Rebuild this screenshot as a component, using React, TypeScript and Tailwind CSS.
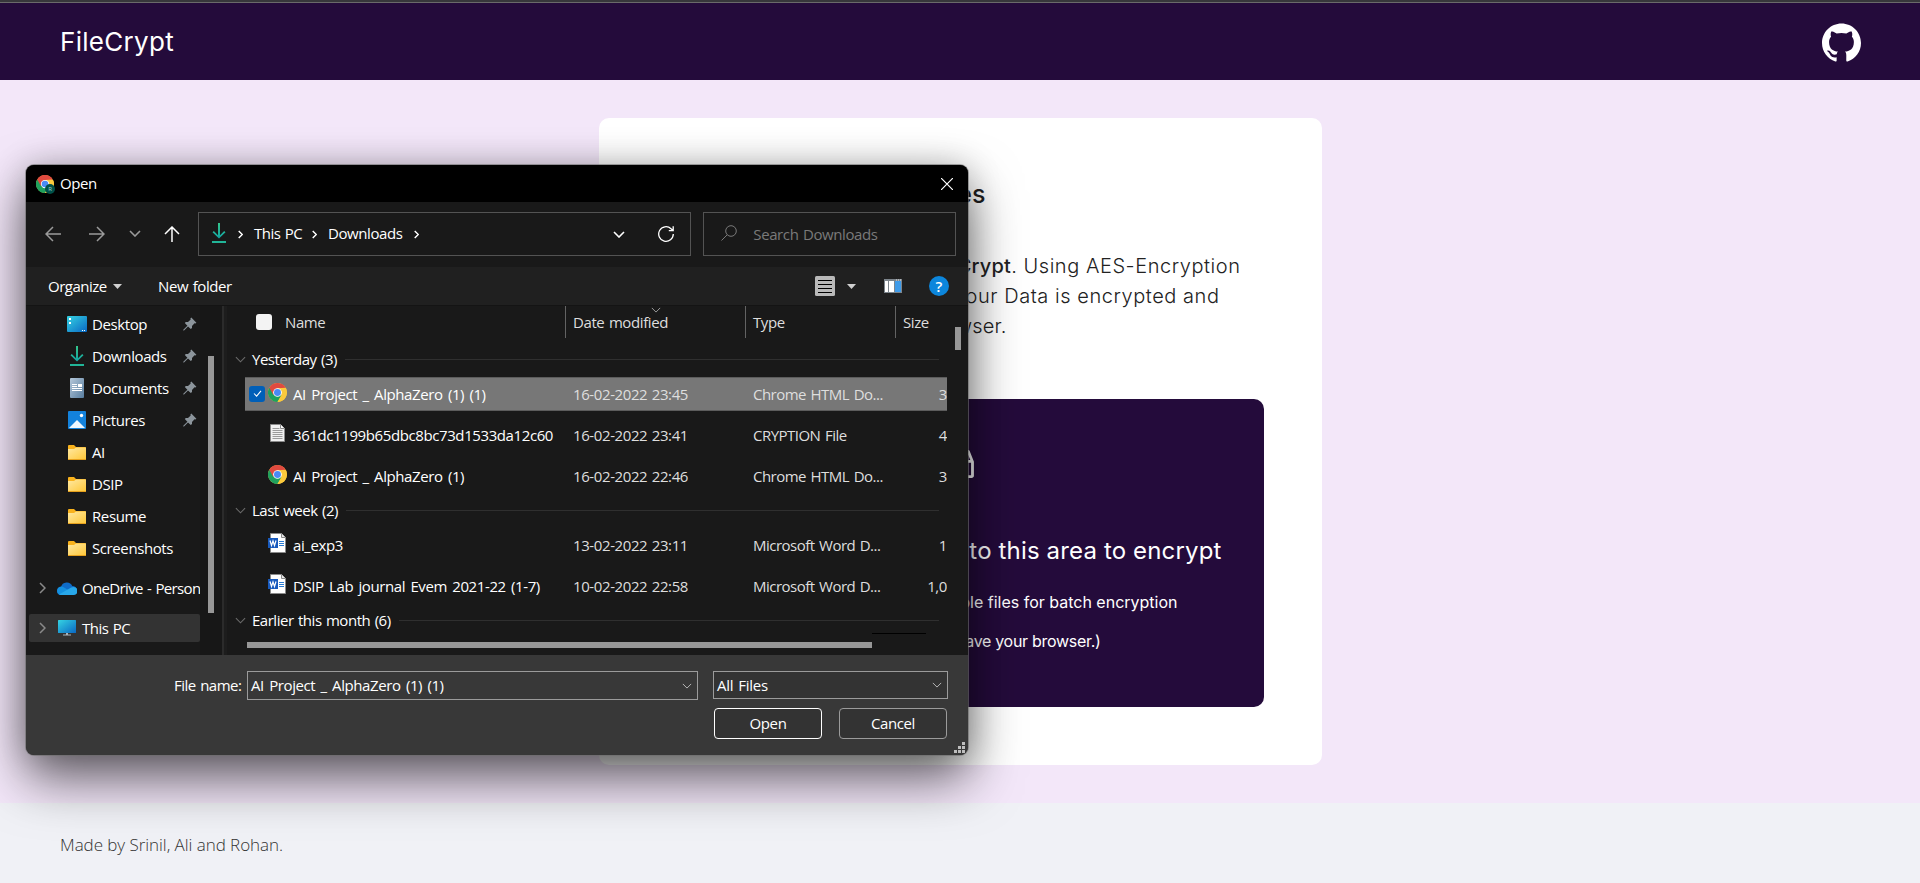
import React from "react";
import { AiOutlineInbox } from "react-icons/ai";
import { SiGithub } from "react-icons/si";

type Box = { className?: string };

function Chrome({ className = "" }: Box) {
  return (
    <svg viewBox="0 0 48 48" className={className}>
      <circle cx="24" cy="24" r="24" fill="#fbc93c" />
      <path d="M24 24 L3.2 12 A24 24 0 0 0 24 48 L34.4 30 Z" fill="#1fa15d" />
      <path d="M3.2 12 A24 24 0 0 1 44.8 12 L24 13 L13.6 30 Z" fill="#e04a3f" />
      <path d="M24 48 L34.4 30 L24 13 H45.3 A24 24 0 0 1 24 48Z" fill="#fbc93c" />
      <circle cx="24" cy="24" r="11" fill="#fff" />
      <circle cx="24" cy="24" r="8.8" fill="#4a8af4" />
    </svg>
  );
}

function Chevron({ d, className = "", w = 1.2 }: Box & { d: "down" | "right"; w?: number }) {
  return d === "down" ? (
    <svg viewBox="0 0 12 7" fill="none" stroke="currentColor" strokeWidth={w} className={className}>
      <path d="M1 1l5 5 5-5" />
    </svg>
  ) : (
    <svg viewBox="0 0 7 12" fill="none" stroke="currentColor" strokeWidth={w} className={className}>
      <path d="M1 1l5 5-5 5" />
    </svg>
  );
}

function DownloadIcon({ className = "" }: Box) {
  return (
    <svg viewBox="0 0 14 20" fill="none" className={className}>
      <defs>
        <linearGradient id="dl" x1="0" y1="0" x2="0" y2="1">
          <stop offset="0" stopColor="#35c68b" />
          <stop offset="1" stopColor="#10a3a3" />
        </linearGradient>
      </defs>
      <path d="M6 0h2v12.2l4.2-4.2 1.3 1.3L7 15.5.5 9.300l1.300-1.300L6 12.200z" fill="url(#dl)" />
      <path d="M0 18h14v2H0z" fill="#21b598" />
    </svg>
  );
}

function Folder() {
  return (
    <svg viewBox="0 0 18 15" className="h-[15px] w-[18px]">
      <defs>
        <linearGradient id="fold" x1="0" y1="0" x2="1" y2="1">
          <stop offset="0" stopColor="#ffe9a2" />
          <stop offset="1" stopColor="#ffc83a" />
        </linearGradient>
      </defs>
      <path d="M0 1q0-1 1-1h5l2 2h9q1 0 1 1v10H0z" fill="#f9b21c" />
      <path d="M0 4h6l2-1.500h10V14H0z" fill="url(#fold)" />
      <path d="M0 14h18v1H0z" fill="#e6a01c" />
    </svg>
  );
}

function DesktopIcon() {
  return (
    <svg viewBox="0 0 20 16" className="h-[16px] w-[20px]">
      <defs>
        <linearGradient id="desk" x1="0" y1="0" x2="1" y2="1">
          <stop offset="0" stopColor="#35d3e2" />
          <stop offset="1" stopColor="#0a68c4" />
        </linearGradient>
      </defs>
      <rect width="20" height="16" rx="1" fill="url(#desk)" />
      <path d="M2 2h2v2H2zM2 6h2v2H2zM15 14h1v1h-1zM17 14h1v1h-1z" fill="#fff" />
    </svg>
  );
}

function DocumentsIcon() {
  return (
    <svg viewBox="0 0 14 20" className="h-[20px] w-[14px]">
      <defs>
        <linearGradient id="doc" x1="0" y1="0" x2="1" y2="1">
          <stop offset="0" stopColor="#b5c8da" />
          <stop offset="1" stopColor="#577d9f" />
        </linearGradient>
      </defs>
      <rect width="14" height="20" rx="1" fill="url(#doc)" />
      <path d="M2 6h5v1H2zM2 8h5v1H2zM8 6h4v3H8zM2 10h10v1H2zM2 12h10v1H2z" fill="#fff" />
    </svg>
  );
}

function PicturesIcon() {
  return (
    <svg viewBox="0 0 18 18" className="h-[18px] w-[18px]">
      <rect width="18" height="18" rx="1" fill="#1382dc" />
      <path d="M1 17l8-8 8 8z" fill="#eef7ff" />
      <circle cx="13.500" cy="4.500" r="1.700" fill="#fff" />
    </svg>
  );
}

function OneDriveIcon() {
  return (
    <svg viewBox="0 0 20 13" className="h-[13px] w-[20px]">
      <path d="M4 5A6 6 0 0 1 15.300 4 4.600 4.600 0 0 1 16.500 13H4A4 4 0 0 1 4 5z" fill="#0f6cc8" />
      <path d="M0.200 8A4.200 4.200 0 0 1 7 5.400L13 9 6 13H4A4.200 4.200 0 0 1 .200 8z" fill="#1490df" />
      <path d="M2 12.500L12 6.700Q14 5 16.500 5A4 4 0 0 1 16.500 13H4z" fill="#28a8ea" />
    </svg>
  );
}

function MonitorIcon() {
  return (
    <svg viewBox="0 0 18 16" className="h-[16px] w-[18px]">
      <defs>
        <linearGradient id="mon" x1="0" y1="0" x2="1" y2="1">
          <stop offset="0" stopColor="#35d3e2" />
          <stop offset="1" stopColor="#0a68c4" />
        </linearGradient>
      </defs>
      <rect width="18" height="13" rx=".5" fill="url(#mon)" />
      <path d="M8 13h2v1.500h3v1H5v-1h3z" fill="#a9b4bd" />
    </svg>
  );
}

function Pin() {
  return (
    <svg viewBox="0 0 14 14" className="h-[14px] w-[14px]">
      <path d="M8.300 0.600L13.400 5.700 12.400 6.500 11.500 6.300 9 9 9 11 7.800 12 5 9.400 1 13.500.300 13.500.300 12.800 4.400 8.800 1.800 6 2.800 5 5 5 7.700 2.500 7.400 1.500z" fill="#8c959c" />
    </svg>
  );
}

function TextFile() {
  return (
    <svg viewBox="0 0 15 18" className="h-[18px] w-[15px]">
      <path d="M.5.500h10l4 4v13H.5z" fill="#f0f0f0" stroke="#8a8a8a" />
      <path d="M10.500.500v4h4" fill="#fff" stroke="#8a8a8a" />
      <path d="M2.500 4.500h7M2.500 6.500h10M2.500 8.500h10M2.500 10.500h10M2.500 12.500h10M2.500 14.500h10" stroke="#9a9a9a" />
    </svg>
  );
}

function WordFile() {
  return (
    <svg viewBox="0 0 18 20" className="h-[20px] w-[18px]">
      <path d="M2.500.500h11l4 4v15h-15z" fill="#fff" stroke="#8a8a8a" />
      <path d="M13.500.500v4h4" fill="#e8e8e8" stroke="#8a8a8a" />
      <path d="M11 8.500h5M11 10.500h5M11 12.500h5" stroke="#2b7cd3" />
      <rect y="5" width="10" height="10" fill="#185abd" />
      <path d="M2 7.500l1.500 5L5 8l1.500 4.500 1.500-5" fill="none" stroke="#fff" strokeWidth="1.200" />
    </svg>
  );
}

const places: { name: string; icon: React.ReactNode; pinned?: boolean }[] = [
  { name: "Desktop", icon: <DesktopIcon />, pinned: true },
  { name: "Downloads", icon: <DownloadIcon className="h-[20px] w-[14px]" />, pinned: true },
  { name: "Documents", icon: <DocumentsIcon />, pinned: true },
  { name: "Pictures", icon: <PicturesIcon />, pinned: true },
  { name: "AI", icon: <Folder /> },
  { name: "DSIP", icon: <Folder /> },
  { name: "Resume", icon: <Folder /> },
  { name: "Screenshots", icon: <Folder /> },
];

function Group({ label, className = "" }: { label: string } & Box) {
  return (
    <div className={`flex items-center pl-2 ${className}`}>
      <Chevron d="down" className="mr-[6px] h-[7px] w-[11px] text-[#6b6b6b]" />
      <span className="mr-2 tracking-[-0.48px]">{label}</span>
      <span className="mr-[9px] h-px flex-1 bg-[#2f2f2f]" />
    </div>
  );
}

type Row = { icon: React.ReactNode; name: string; date: string; type: string; size: string; selected?: boolean };

function FileRow({ icon, name, date, type, size, selected }: Row) {
  return (
    <div className="flex h-[41px] items-center pl-[18px]">
      <div className={`flex h-[34px] w-[702px] items-center overflow-hidden whitespace-nowrap ${selected ? "border-y border-[#5c5c5c] bg-[#777777]" : ""}`}>
        <div className="flex w-[22px] shrink-0 pl-[4px]">
          {selected && (
            <span className="flex h-4 w-4 items-center justify-center rounded-[3px] bg-[#005fb8]">
              <svg viewBox="0 0 10 8" className="h-[7px] w-[9px]" fill="none" stroke="#fff" strokeWidth="1.200">
                <path d="M1 4l3 3 5-6" />
              </svg>
            </span>
          )}
        </div>
        <div className="mr-[6px] flex w-5 shrink-0 justify-center pb-[3px]">{icon}</div>
        <span className="w-[280px] shrink-0 tracking-[-0.4px] [word-spacing:1.8px]">{name}</span>
        <span className="w-[180px] shrink-0 tracking-[-0.4px] [word-spacing:1px] text-[#dedede]">{date}</span>
        <span className="w-[142px] shrink-0 tracking-[-0.52px] [word-spacing:1.2px] text-[#dedede]">{type}</span>
        <span className="flex-1 text-right text-[#dedede]">{size}</span>
      </div>
    </div>
  );
}

function Dialog() {
  return (
    <div className="absolute left-[26px] top-[165px] flex h-[590px] w-[942px] flex-col overflow-hidden rounded-[8px] bg-[#191919] font-['Open_Sans','Noto_Sans',sans-serif] text-[15px] leading-5 tracking-[-0.4px] text-white [word-spacing:1px]">
      <div className="flex h-[37px] shrink-0 items-center bg-black pl-[10px] pr-[15px]">
        <span className="relative mr-[6px] h-[18px] w-[18px]">
          <Chrome className="h-[18px] w-[18px]" />
          <span className="absolute -bottom-px -right-px flex h-[10px] w-[10px] items-center justify-center rounded-full bg-[#005048] text-[6px] leading-none text-[#9fd0c8]">R</span>
        </span>
        <span className="flex-1 pb-[2px]">Open</span>
        <svg viewBox="0 0 12 12" className="h-3 w-3" stroke="#fff" strokeWidth="1.200">
          <path d="M0 0l12 12M12 0L0 12" />
        </svg>
      </div>

      <div className="flex h-[65px] shrink-0 items-center pb-[1px] pl-[19px] pr-3">
        <svg viewBox="0 0 16 16" fill="none" stroke="#9a9a9a" strokeWidth="1.500" className="mr-7 h-4 w-4">
          <path d="M16 8H1M8 1L1 8l7 7" />
        </svg>
        <svg viewBox="0 0 16 16" fill="none" stroke="#9a9a9a" strokeWidth="1.500" className="mr-[24px] h-4 w-4">
          <path d="M0 8h15M8 1l7 7-7 7" />
        </svg>
        <Chevron d="down" w={1.6} className="mb-[2px] mr-[23px] h-[7px] w-3 text-[#9a9a9a]" />
        <svg viewBox="0 0 16 16" fill="none" stroke="#fff" strokeWidth="1.500" className="mr-[18px] h-4 w-4">
          <path d="M8 16V1M1 8l7-7 7 7" />
        </svg>
        <div className="mr-3 flex h-11 w-[494px] items-center border border-[#535353] pl-[13px] pr-4">
          <DownloadIcon className="mb-[2px] mr-3 h-5 w-[14px]" />
          <Chevron d="right" w={2} className="mr-[11px] h-[9px] w-[5px]" />
          <span className="w-[58px] pb-[2px] tracking-[-0.5px]">This PC</span>
          <Chevron d="right" w={2} className="mr-[11px] h-[9px] w-[5px]" />
          <span className="w-[86px] pb-[2px]">Downloads</span>
          <Chevron d="right" w={2} className="h-[9px] w-[5px]" />
          <Chevron d="down" w={1.600} className="ml-auto mr-[33px] h-[7px] w-3" />
          <svg viewBox="0 0 16 16" fill="none" stroke="#fff" strokeWidth="1.300" className="h-4 w-4">
            <path d="M15.300 8A7.300 7.300 0 1 1 13 2.700l2 1.800M15.200.300v4.300h-4.400" />
          </svg>
        </div>
        <div className="flex h-11 w-[253px] items-center border border-[#535353] pl-[17px] text-[#7a7a7a]">
          <svg viewBox="0 0 16 16" fill="none" stroke="currentColor" className="mb-[3px] mr-4 h-4 w-4">
            <circle cx="10" cy="6" r="5.300" />
            <path d="M6.200 9.800L.500 15.500" />
          </svg>
          Search Downloads
        </div>
      </div>

      <div className="flex h-[38px] shrink-0 items-center bg-[#202020] pl-[22px] pr-[19px]">
        <span className="w-[65px] tracking-[-0.5px]">Organize</span>
        <svg viewBox="0 0 9 5" className="mr-[36px] h-[5px] w-[9px]" fill="#d0d0d0"><path d="M0 0h9L4.500 5z" /></svg>
        <span className="flex-1">New folder</span>
        <svg viewBox="0 0 20 20" className="mr-3 h-5 w-5">
          <rect width="20" height="20" rx="1.500" fill="#b9b9b9" />
          <path d="M3 4.500h14M3 8.500h14M3 12.500h14M3 16.500h14" stroke="#000" />
        </svg>
        <svg viewBox="0 0 9 5" className="mr-7 h-[5px] w-[9px]" fill="#d0d0d0"><path d="M0 0h9L4.500 5z" /></svg>
        <svg viewBox="0 0 18 14" className="mr-[27px] h-[14px] w-[18px]">
          <path d="M0 0h18v14H0z" fill="#7d858c" />
          <path d="M1 2h3v11H1zM5 2h5v11H5z" fill="#fff" />
          <path d="M11 2h6v11h-6z" fill="#3f9be8" />
          <path d="M12 1h1M14 1h1M16 1h1" stroke="#fff" strokeWidth=".8" />
        </svg>
        <span className="flex h-5 w-5 items-center justify-center rounded-full bg-[#0c86dc] text-[15px] font-semibold leading-none tracking-normal">?</span>
      </div>

      <div className="flex h-[350px] shrink-0 border-t border-[#141414]">
        <div className="w-[174px] shrink-0 overflow-hidden pl-[3px] pt-[2px]">
          {places.map((p) => (
            <div key={p.name} className="flex h-8 items-center pl-[37px] pr-[3px]">
              <span className="mr-[4px] flex w-[22px] justify-center">{p.icon}</span>
              <span className="flex-1">{p.name}</span>
              {p.pinned && <Pin />}
            </div>
          ))}
          <div className="mt-[10px] flex h-[28px] items-center overflow-hidden whitespace-nowrap pl-[10px]">
            <Chevron d="right" w={1.500} className="mr-[11px] h-3 w-[7px] shrink-0 text-[#8a8a8a]" />
            <span className="mr-[5px] shrink-0"><OneDriveIcon /></span>
            <span className="tracking-[-0.65px]">OneDrive - Person</span>
          </div>
          <div className="mt-3 flex h-7 items-center rounded-[2px] bg-[#333] pl-[10px]">
            <Chevron d="right" w={1.500} className="mr-[12px] h-3 w-[7px] text-[#8a8a8a]" />
            <span className="mr-[6px]"><MonitorIcon /></span>
            <span className="tracking-[-0.5px]">This PC</span>
          </div>
        </div>
        <div className="w-[22px] shrink-0 bg-[#171717] pl-2 pt-[50px]">
          <div className="h-[257px] w-[6px] bg-[#979797]" />
        </div>
        <div className="w-[5px] shrink-0 border-l-2 border-[#2b2b2b] bg-[#1d1d1d]" />

        <div className="flex w-[721px] shrink-0 flex-col">
          <div className="flex h-8 shrink-0 items-center pl-[29px] pr-px text-[#dedede]">
            <span className="mr-[13px] h-4 w-4 rounded-[3px] bg-[#f3f3f3]" />
            <span className="flex-1">Name</span>
            <span className="relative flex h-8 w-[180px] items-center border-l border-[#636363] pl-[7px]">
              Date modified
              <Chevron d="down" className="absolute left-[85px] top-px h-[6px] w-[10px] text-[#9a9a9a]" />
            </span>
            <span className="flex h-8 w-[150px] items-center border-l border-[#636363] pl-[7px]">Type</span>
            <span className="flex h-8 w-[52px] items-center border-l border-[#636363] pl-[7px]">Size</span>
          </div>
          <Group label="Yesterday (3)" className="mt-[11px] h-5" />
          <div className="mt-[4px]">
            <FileRow selected icon={<Chrome className="h-[19px] w-[19px]" />} name="AI Project _ AlphaZero (1) (1)" date="16-02-2022 23:45" type="Chrome HTML Do..." size="3" />
            <FileRow icon={<TextFile />} name="361dc1199b65dbc8bc73d1533da12c60" date="16-02-2022 23:41" type="CRYPTION File" size="4" />
            <FileRow icon={<Chrome className="h-[19px] w-[19px]" />} name="AI Project _ AlphaZero (1)" date="16-02-2022 22:46" type="Chrome HTML Do..." size="3" />
          </div>
          <Group label="Last week (2)" className="mt-[4px] h-5" />
          <div className="mt-[4px]">
            <FileRow icon={<WordFile />} name="ai_exp3" date="13-02-2022 23:11" type="Microsoft Word D..." size="1" />
            <FileRow icon={<WordFile />} name="DSIP Lab journal Evem 2021-22 (1-7)" date="10-02-2022 22:58" type="Microsoft Word D..." size="1,0" />
          </div>
          <Group label="Earlier this month (6)" className="mt-[4px] h-5" />
          <div className="ml-[645px] mt-[3px] h-px w-[54px] bg-black" />
          <div className="ml-[20px] mt-[8px] h-[6px] w-[625px] bg-[#979797]" />
        </div>
        <div className="pl-[7px] pt-[21px]">
          <div className="h-[23px] w-[6px] bg-[#979797]" />
        </div>
      </div>

      <div className="relative flex-1 bg-[#383838] pt-4">
        <div className="flex h-[29px] pl-[148px]">
          <span className="w-[73px] pt-[4px] tracking-[-0.5px]">File name:</span>
          <div className="mr-[15px] flex w-[451px] items-center justify-between border border-[#9b9b9b] pl-[3px] pr-[5px]">
            <span className="pb-px [word-spacing:1.8px]">AI Project _ AlphaZero (1) (1)</span>
            <Chevron d="down" w={1} className="h-[6px] w-[10px] text-[#d0d0d0]" />
          </div>
          <div className="flex h-7 w-[235px] items-center justify-between border border-[#9b9b9b] bg-[#333] pl-[3px] pr-[5px]">
            <span className="tracking-[-0.2px]">All Files</span>
            <Chevron d="down" w={1} className="h-[6px] w-[10px] text-[#d0d0d0]" />
          </div>
        </div>
        <div className="mt-2 flex justify-end gap-[17px] pr-[21px]">
          <button className="h-[31px] w-[108px] rounded-[4px] border border-white bg-[#333] pb-[2px]">Open</button>
          <button className="h-[31px] w-[108px] rounded-[4px] border border-[#9b9b9b] bg-[#333] pb-[2px]">Cancel</button>
        </div>
        <svg viewBox="0 0 11 11" className="absolute bottom-[2px] right-[3px] h-[11px] w-[11px]" fill="#bdbdbd">
          <path d="M8 0h3v3H8zM4 4h3v3H4zM8 4h3v3H8zM0 8h3v3H0zM4 8h3v3H4zM8 8h3v3H8z" />
        </svg>
      </div>
    </div>
  );
}

export default function App() {
  return (
    <div className="relative flex h-[883px] w-[1920px] flex-col overflow-hidden font-['Inter',sans-serif]">
      <div className="h-[3px] shrink-0 border-b border-[#6a6a6a] bg-[#37373b]" />
      <header className="flex h-[77px] shrink-0 items-center justify-between bg-[#240b3b] pl-[60px] pr-[59px] text-white">
        <span className="text-[26px] tracking-[0.3px]">FileCrypt</span>
        <SiGithub className="mt-[2px] h-[39px] w-[39px]" />
      </header>
      <main className="flex h-[723px] shrink-0 justify-center bg-[#f3e7f9] pt-[38px]">
        <section className="h-[647px] w-[723px] rounded-[10px] bg-white pl-[57px] pr-[58px] pt-[58px]">
          <h1 className="w-[330px] whitespace-nowrap text-right text-[25px] font-medium leading-9 text-[#1f1f1f]">Encrypt your Files</h1>
          <div className="mt-[39px] whitespace-nowrap text-right text-[20px] font-light leading-[30px] tracking-[0.55px] text-[#222]">
            <p className="w-[585px]">Welcome to <b className="font-medium tracking-[0.2px]">FileCrypt</b>. Using AES-Encryption</p>
            <p className="w-[564px]">your Data is encrypted and</p>
            <p className="w-[351px] tracking-[0.2px]">in your browser.</p>
          </div>
          <div className="mt-[58px] flex h-[308px] flex-col whitespace-nowrap rounded-[10px] bg-[#240b3b] text-right text-white">
            <AiOutlineInbox className="ml-[285px] mt-[46px] h-[38px] w-[38px]" />
            <p className="mt-[50px] w-[566px] text-[24px] leading-9 tracking-[0.15px]">Click or drag file to this area to encrypt</p>
            <p className="mt-[21px] w-[522px] text-[16px] leading-6">Select multiple files for batch encryption</p>
            <p className="mt-[15px] w-[445px] text-[16px] leading-6 tracking-[-0.3px]">(Files never leave your browser.)</p>
          </div>
        </section>
      </main>
      <footer className="flex h-20 shrink-0 items-center bg-[#f0f1f6] pl-[60px] pt-1 font-['Open_Sans',sans-serif] text-[17px] font-light tracking-[-0.05px] text-[#333]">
        Made by Srinil, Ali and Rohan.
      </footer>
      <div className="absolute left-[26px] top-[165px] h-[590px] w-[942px] rounded-[8px] shadow-[0_0_0_1px_rgba(110,110,110,0.6),0_24px_52px_rgba(0,0,0,0.58),0_0_34px_rgba(0,0,0,0.2)]" />
      <Dialog />
    </div>
  );
}
